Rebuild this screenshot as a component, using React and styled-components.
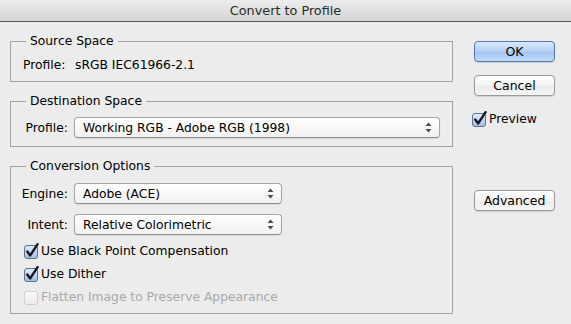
import React from 'react'
import styled, { createGlobalStyle } from 'styled-components'

const GlobalStyle = createGlobalStyle`
  html, body {
    margin: 0;
    padding: 0;
    background: #ececec;
  }
  body {
    font-family: "DejaVu Sans", "Noto Sans", sans-serif;
    font-size: 12px;
    color: #000;
  }
`

const Window = styled.div`
  width: 571px;
  height: 324px;
  display: flex;
  flex-direction: column;
  background: #ececec;
  overflow: hidden;
`

const TitleBar = styled.div`
  height: 21px;
  flex: none;
  display: flex;
  align-items: center;
  justify-content: center;
  background: linear-gradient(#ececec, #d4d4d4);
  border-bottom: 1px solid #5a5a5a;
  color: #2a2a2a;
  font-size: 12.8px;
`

const Body = styled.div`
  display: flex;
  padding: 11px 0 0 10px;
  gap: 18px;
`

const LeftColumn = styled.div`
  width: 443px;
  display: flex;
  flex-direction: column;
  gap: 11px;
`

const Group = styled.fieldset`
  margin: 0;
  border: 1px solid #a2a2a2;
  padding: 8px 12px ${p => p.$bottom || 8}px 12px;
  display: flex;
  flex-direction: column;
  min-width: 0;
`

const Legend = styled.legend`
  margin-left: 3px;
  padding: 0 4px;
  line-height: 16px;
  font-size: 12.3px;
`

const Row = styled.div`
  display: flex;
  align-items: center;
  height: ${p => p.$h || 21}px;
  margin-top: ${p => p.$mt || 0}px;
`

const Label = styled.span`
  width: 45px;
  flex: none;
  display: flex;
  justify-content: ${p => (p.$left ? 'flex-start' : 'flex-end')};
  white-space: nowrap;
  margin-right: ${p => p.$gap || 6}px;
  font-size: 12.3px;
`

const Value = styled.span`
  font-size: 12.3px;
`

const SelectBox = styled.div`
  width: ${p => p.$w}px;
  height: 21px;
  box-sizing: border-box;
  border: 1px solid #a4a4a4;
  border-bottom-color: #8e8e8e;
  border-radius: 4px;
  background: linear-gradient(#ffffff, #f1f1f1);
  box-shadow: 0 1px 1px rgba(0, 0, 0, 0.08);
  display: flex;
  align-items: center;
  justify-content: space-between;
  padding: 0 7px 0 8px;
  font-size: 12.3px;
  white-space: nowrap;
`

const CheckRows = styled.div`
  display: flex;
  flex-direction: column;
  gap: 3px;
  margin-top: 6px;
`

const CheckLabel = styled.label`
  display: flex;
  align-items: center;
  height: 20px;
  gap: 1px;
  margin-top: ${p => p.$mt || 0}px;
  font-size: 12.3px;
  color: ${p => (p.$disabled ? '#a9a9a9' : '#000')};
`

const RightColumn = styled.div`
  display: flex;
  flex-direction: column;
  padding-top: 8px;
  width: 90px;
`

const Button = styled.div`
  width: 81px;
  height: 21px;
  box-sizing: border-box;
  margin-left: 3px;
  margin-top: ${p => p.$mt || 0}px;
  border-radius: 4px;
  border: 1px solid ${p => (p.$primary ? '#5677ad' : '#989898')};
  background: ${p =>
    p.$primary
      ? 'linear-gradient(#dbe9fb, #b3d0f5 50%, #9fc4f3 51%, #c3dcf9)'
      : 'linear-gradient(#ffffff, #f3f3f3 50%, #ebebeb 51%, #f6f6f6)'};
  box-shadow: 0 1px 1px rgba(0, 0, 0, 0.12);
  display: flex;
  align-items: center;
  justify-content: center;
  font-size: 12.5px;
`

const Arrows = () => (
  <svg width="7" height="11" viewBox="0 0 7 11">
    <path d="M3.5 0.5 L6.5 4 L0.5 4 Z" fill="#4a4a4a" />
    <path d="M3.5 10.5 L6.5 7 L0.5 7 Z" fill="#4a4a4a" />
  </svg>
)

const CheckIcon = ({ checked, disabled }) => (
  <svg width="17" height="17" viewBox="0 0 17 17" style={{ flex: 'none' }}>
    <defs>
      <linearGradient id="cbOn" x1="0" y1="0" x2="0" y2="1">
        <stop offset="0" stopColor="#e3edfb" />
        <stop offset="1" stopColor="#9ebde9" />
      </linearGradient>
      <linearGradient id="cbOff" x1="0" y1="0" x2="0" y2="1">
        <stop offset="0" stopColor="#fbfbfb" />
        <stop offset="1" stopColor="#ececec" />
      </linearGradient>
    </defs>
    <rect
      x="1.5"
      y="2.5"
      width="13"
      height="13"
      rx="2.5"
      fill={disabled ? 'url(#cbOff)' : 'url(#cbOn)'}
      stroke={disabled ? '#cfcfcf' : '#5f6f8c'}
    />
    {checked && (
      <path
        d="M4.2 8.6 L7.2 12.4 L14.6 1.2"
        fill="none"
        stroke="#14161c"
        strokeWidth="2.4"
        strokeLinecap="round"
        strokeLinejoin="round"
      />
    )}
  </svg>
)

const Check = ({ checked, disabled, mt, children }) => (
  <CheckLabel $disabled={disabled} $mt={mt}>
    <CheckIcon checked={checked} disabled={disabled} />
    {children}
  </CheckLabel>
)

const Select = ({ w, children }) => (
  <SelectBox $w={w}>
    <span>{children}</span>
    <Arrows />
  </SelectBox>
)

export default function App() {
  return (
    <>
      <GlobalStyle />
      <Window>
        <TitleBar>Convert to Profile</TitleBar>
        <Body>
          <LeftColumn>
            <Group>
              <Legend>Source Space</Legend>
              <Row $h={16}>
                <Label $left $gap={7}>Profile:</Label>
                <Value>sRGB IEC61966-2.1</Value>
              </Row>
            </Group>
            <Group>
              <Legend>Destination Space</Legend>
              <Row>
                <Label>Profile:</Label>
                <Select w={366}>Working RGB - Adobe RGB (1998)</Select>
              </Row>
            </Group>
            <Group $bottom={6}>
              <Legend>Conversion Options</Legend>
              <Row $mt={1}>
                <Label>Engine:</Label>
                <Select w={208}>Adobe (ACE)</Select>
              </Row>
              <Row $mt={10}>
                <Label>Intent:</Label>
                <Select w={208}>Relative Colorimetric</Select>
              </Row>
              <CheckRows>
                <Check checked>Use Black Point Compensation</Check>
                <Check checked>Use Dither</Check>
                <Check disabled>Flatten Image to Preserve Appearance</Check>
              </CheckRows>
            </Group>
          </LeftColumn>
          <RightColumn>
            <Button $primary>OK</Button>
            <Button $mt={13}>Cancel</Button>
            <Check checked mt={13}>Preview</Check>
            <Button $mt={61}>Advanced</Button>
          </RightColumn>
        </Body>
      </Window>
    </>
  )
}
